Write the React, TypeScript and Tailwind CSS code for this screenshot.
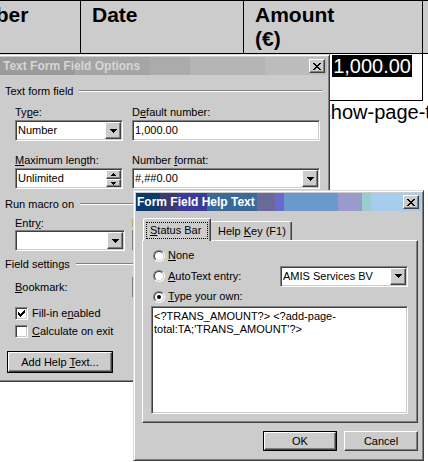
import React from 'react';

const raised = 'border border-t-white border-l-white border-r-[#404040] border-b-[#404040] shadow-[inset_-1px_-1px_0_#808080] bg-[#cccccc]';
const sunken = 'border border-t-[#808080] border-l-[#808080] border-r-white border-b-white shadow-[inset_1px_1px_0_#404040,inset_-1px_-1px_0_#cccccc]';
const frame = 'border border-t-[#dcdcdc] border-l-[#dcdcdc] border-r-[#404040] border-b-[#404040] shadow-[inset_1px_1px_0_#ffffff,inset_-1px_-1px_0_#808080] bg-[#cccccc] p-[2px]';

const U: React.FC<{ children: React.ReactNode }> = ({ children }) => <span className="underline">{children}</span>;

const Arrow = () => (
  <svg width="7" height="4" viewBox="0 0 7 4" shapeRendering="crispEdges">
    <path d="M0 0h7v1H0zM1 1h5v1H1zM2 2h3v1H2zM3 3h1v1H3z" fill="#000" />
  </svg>
);

const CloseX = () => (
  <svg width="8" height="7" viewBox="0 0 8 7" shapeRendering="crispEdges">
    <path d="M0 0h2v1H0zM6 0h2v1H6zM1 1h2v1H1zM5 1h2v1H5zM2 2h4v1H2zM3 3h2v1H3zM2 4h4v1H2zM1 5h2v1H1zM5 5h2v1H5zM0 6h2v1H0zM6 6h2v1H6z" fill="#000" />
  </svg>
);

const CloseButton = () => (
  <div className={`${raised} w-[16px] h-[14px] flex items-center justify-center shrink-0 ml-auto`}>
    <CloseX />
  </div>
);

const Combo: React.FC<{ value?: string; className?: string }> = ({ value, className = '' }) => (
  <div className={`${sunken} bg-white h-[21px] flex items-center p-[1px] ${className}`}>
    <span className="flex-1 pl-[1px] whitespace-nowrap overflow-hidden">{value}</span>
    <div className={`${raised} w-[16px] h-[17px] flex items-center justify-center shrink-0`}>
      <Arrow />
    </div>
  </div>
);

const Field: React.FC<{ value?: string; className?: string }> = ({ value, className = '' }) => (
  <div className={`${sunken} bg-white h-[21px] flex items-center p-[1px] ${className}`}>
    <span className="pl-[1px] whitespace-nowrap">{value}</span>
  </div>
);

const SpinField: React.FC<{ value: string; className?: string }> = ({ value, className = '' }) => (
  <div className={`${sunken} bg-white h-[21px] flex items-center p-[1px] ${className}`}>
    <span className="flex-1 pl-[1px] whitespace-nowrap">{value}</span>
    <div className="flex flex-col w-[15px] h-[17px] shrink-0">
      <div className={`${raised} h-[9px] flex items-center justify-center`}>
        <svg width="5" height="3" viewBox="0 0 5 3" shapeRendering="crispEdges"><path d="M2 0h1v1H2zM1 1h3v1H1zM0 2h5v1H0z" fill="#000" /></svg>
      </div>
      <div className={`${raised} h-[8px] flex items-center justify-center`}>
        <svg width="5" height="3" viewBox="0 0 5 3" shapeRendering="crispEdges"><path d="M0 0h5v1H0zM1 1h3v1H1zM2 2h1v1H2z" fill="#000" /></svg>
      </div>
    </div>
  </div>
);

const Radio: React.FC<{ checked?: boolean }> = ({ checked }) => (
  <div className="w-[12px] h-[12px] rounded-full border border-t-[#808080] border-l-[#808080] border-r-white border-b-white shrink-0">
    <div className="w-full h-full rounded-full border border-t-[#404040] border-l-[#404040] border-r-[#cccccc] border-b-[#cccccc] bg-white flex items-center justify-center">
      {checked && <div className="w-[4px] h-[4px] rounded-full bg-black" />}
    </div>
  </div>
);

const CheckBox: React.FC<{ checked?: boolean }> = ({ checked }) => (
  <div className={`${sunken} bg-white w-[13px] h-[13px] flex items-center justify-center shrink-0`}>
    {checked && (
      <svg width="7" height="7" viewBox="0 0 7 7" shapeRendering="crispEdges">
        <path d="M6 0h1v1H6zM5 1h2v1H5zM0 2h1v1H0zM4 2h3v1H4zM0 3h2v1H0zM3 3h3v1H3zM0 4h5v1H0zM1 5h3v1H1zM2 6h1v1H2z" fill="#000" />
      </svg>
    )}
  </div>
);

const Group: React.FC<{ label: string; className?: string }> = ({ label, className = '' }) => (
  <div className={`flex h-[13px] ${className}`}>
    <span className="whitespace-nowrap pr-[6px]">{label}</span>
    <div className="flex-1 mt-[5px] h-[2px] border-t border-t-[#808080] border-b border-b-white" />
  </div>
);

const DefaultButton: React.FC<{ children: React.ReactNode; className?: string }> = ({ children, className = '' }) => (
  <div className={`border border-black ${className}`}>
    <div className={`${raised} w-full h-full flex items-center justify-center`}>{children}</div>
  </div>
);

const App: React.FC = () => {
  return (
    <div className="relative w-[428px] h-[462px] overflow-hidden bg-white text-black font-['Liberation_Sans',Arial,sans-serif]">
      {/* document behind */}
      <div className="grid grid-cols-[80px_163px_179px_6px] h-[54px] bg-[#cccccc] border-t border-b border-black text-[21px] font-bold leading-[24px]">
        <div className="pt-[2px] overflow-hidden whitespace-nowrap"><span className="ml-[-51px]">Number</span></div>
        <div className="border-l border-black pl-[11px] pt-[2px]">Date</div>
        <div className="border-l border-black pl-[11px] pt-[2px]">Amount<br />(€)</div>
        <div className="border-l border-black" />
      </div>
      <div className="grid grid-cols-[80px_163px_179px_6px] h-[47px]">
        <div className="border-b border-black" />
        <div className="border-l border-b border-black" />
        <div className="border-l border-b border-black flex justify-end items-start pr-[10px] pt-[1px]">
          <span className="bg-black text-white text-[20px] leading-[22px] px-[1px]">1,000.00</span>
        </div>
        <div className="border-l border-black" />
      </div>
      <div className="pl-[298px] text-[20px] leading-[23px] whitespace-nowrap">&lt;?show-page-total?&gt;</div>

      {/* Text Form Field Options */}
      <div className={`absolute left-[-3px] top-[54px] w-[333px] h-[328px] ${frame} text-[11px] leading-[13px]`}>
        <div className="h-[18px] flex items-center pl-[3px] pr-[2px] bg-[linear-gradient(90deg,#9b9b9b_0_75px,#a5a5a5_75px_150px,#ababab_150px_190px,#b4b4b4_190px_265px,#bcbcbc_265px)]">
          <span className="font-bold text-[12px] text-[#d6d6d6] whitespace-nowrap">Text Form Field Options</span>
          <CloseButton />
        </div>
        <div className="pl-[5px] pr-[5px]">
          <Group label="Text form field" className="mt-[10px]" />
          <div className="pl-[10px] grid grid-cols-[108px_188px] gap-x-[9px]">
            <div className="mt-[8px]">Ty<U>p</U>e:</div>
            <div className="mt-[8px]">D<U>e</U>fault number:</div>
            <Combo value="Number" className="mt-[1px]" />
            <Field value="1,000.00" className="mt-[1px]" />
            <div className="mt-[13px]"><U>M</U>aximum length:</div>
            <div className="mt-[13px]">Number <U>f</U>ormat:</div>
            <SpinField value="Unlimited" className="mt-[1px]" />
            <Combo value="#,##0.00" className="mt-[1px]" />
          </div>
          <Group label="Run macro on" className="mt-[9px]" />
          <div className="pl-[10px] grid grid-cols-[110px_188px] gap-x-[7px]">
            <div className="mt-[6px]">Entr<U>y</U>:</div>
            <div className="mt-[6px]">E<U>x</U>it:</div>
            <Combo className="mt-0" />
            <Combo className="mt-0" />
          </div>
          <Group label="Field settings" className="mt-[7px]" />
          <div className="pl-[10px] mt-[6px] flex items-center h-[21px]">
            <span className="w-[117px]"><U>B</U>ookmark:</span>
            <Field className="w-[188px]" />
          </div>
          <div className="pl-[10px] mt-[9px] flex items-center gap-[4px] h-[13px]">
            <CheckBox checked />
            <span>Fill-in e<U>n</U>abled</span>
          </div>
          <div className="pl-[10px] mt-[5px] flex items-center gap-[4px] h-[13px]">
            <CheckBox />
            <span><U>C</U>alculate on exit</span>
          </div>
          <DefaultButton className="ml-[2px] mt-[13px] w-[106px] h-[22px]">
            <span>Add Help <U>T</U>ext...</span>
          </DefaultButton>
        </div>
      </div>

      {/* Form Field Help Text */}
      <div className={`absolute left-[133px] top-[190px] w-[291px] h-[271px] ${frame} text-[11px] leading-[13px]`}>
        <div className="h-[18px] flex items-center pl-[1px] pr-[2px] bg-[linear-gradient(90deg,#0c3a6c_0_24px,#3a3a6c_24px_41px,#3a3a9a_41px_71px,#3a6a9a_71px_121px,#6a6a9a_121px_139px,#6a6acd_139px_148px,#6a9acd_148px_202px,#9a9acd_202px_226px,#9acdcd_226px_235px,#a6cdee_235px)]">
          <span className="font-bold text-[12px] text-white whitespace-nowrap">Form Field Help Text</span>
          <CloseButton />
        </div>
        <div className="pl-[6px] pr-[3px]">
          <div className="relative z-10 mt-[7px] h-[22px] flex items-end pl-[1px]">
            <div className="w-[68px] h-[23px] -mb-[1px] bg-[#cccccc] border-t border-l border-r border-t-white border-l-white border-r-[#404040] shadow-[inset_-1px_0_0_#808080] rounded-t-[2px] pt-[3px] pl-[2px]">
              <div className="w-[62px] h-[17px] border border-dotted border-black pl-[3px] pt-[1px] whitespace-nowrap">
                <U>S</U>tatus Bar
              </div>
            </div>
            <div className="w-[81px] h-[19px] bg-[#cccccc] border-t border-r border-t-white border-r-[#404040] shadow-[inset_-1px_0_0_#808080] rounded-tr-[2px] pt-[3px] pl-[7px] whitespace-nowrap">
              Help <U>K</U>ey (F1)
            </div>
          </div>
          <div className="h-[183px] border border-t-white border-l-white border-r-[#404040] border-b-[#404040] shadow-[inset_-1px_-1px_0_#808080] pt-[5px] pl-[8px] pr-[9px]">
            <div className="h-[19px] flex items-center pl-[2px] gap-[3px]">
              <Radio />
              <span><U>N</U>one</span>
            </div>
            <div className="h-[22px] flex items-center pl-[2px] gap-[3px]">
              <Radio />
              <span><U>A</U>utoText entry:</span>
              <Combo value="AMIS Services BV" className="ml-auto w-[128px]" />
            </div>
            <div className="h-[19px] flex items-center pl-[2px] gap-[3px]">
              <Radio checked />
              <span><U>T</U>ype your own:</span>
            </div>
            <div className={`${sunken} bg-white h-[108px] p-[1px]`}>
              <div className="pl-[1px] pt-[2px] whitespace-nowrap">
                &lt;?TRANS_AMOUNT?&gt; &lt;?add-page-<br />total:TA;'TRANS_AMOUNT'?&gt;
              </div>
            </div>
          </div>
          <div className="mt-[8px] flex justify-end gap-[7px]">
            <DefaultButton className="w-[74px] h-[20px]">OK</DefaultButton>
            <div className={`${raised} w-[74px] h-[20px] flex items-center justify-center`}>Cancel</div>
          </div>
        </div>
      </div>
    </div>
  );
};

export default App;
